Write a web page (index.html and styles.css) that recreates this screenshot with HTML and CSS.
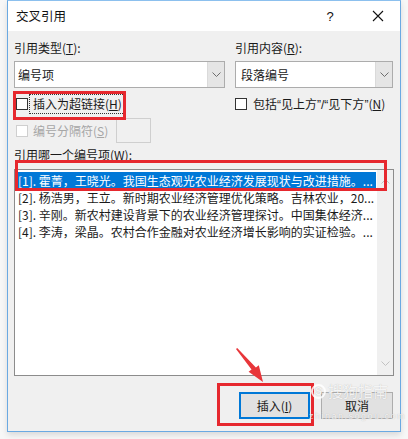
FILE: index.html
```html
<!DOCTYPE html>
<html lang="zh">
<head>
<meta charset="utf-8">
<link rel="stylesheet" href="styles.css">
</head>
<body>
<div class="dialog">
  <div class="titlebar">
    <span class="title">交叉引用</span>
    <span class="help">?</span>
    <span class="close"><svg width="12" height="12" viewBox="0 0 12 12"><path d="M1 1 L11 11 M11 1 L1 11" stroke="#111" stroke-width="1.1" fill="none"/></svg></span>
  </div>
  <div class="content">
    <div class="grid">
      <div class="col left">
        <div class="label">引用类型(<u>T</u>):</div>
        <div class="combo">
          <span class="combo-text">编号项</span>
          <span class="drop"><svg width="9" height="6" viewBox="0 0 9 6"><path d="M0.5 0.5 L4.5 4.5 L8.5 0.5" stroke="#6d6d6d" fill="none"/></svg></span>
        </div>
        <div class="check">
          <span class="box"></span>
          <span class="check-text focused">插入为超链接(<u>H</u>)</span>
        </div>
        <div class="check disabled">
          <span class="box"></span>
          <span class="check-text">编号分隔符(<u>S</u>)</span>
          <span class="sep-input"></span>
        </div>
      </div>
      <div class="col right">
        <div class="label">引用内容(<u>R</u>):</div>
        <div class="combo">
          <span class="combo-text">段落编号</span>
          <span class="drop"><svg width="9" height="6" viewBox="0 0 9 6"><path d="M0.5 0.5 L4.5 4.5 L8.5 0.5" stroke="#6d6d6d" fill="none"/></svg></span>
        </div>
        <div class="check">
          <span class="box"></span>
          <span class="check-text">包括<span class="q">“</span>见上方<span class="q">”/“</span>见下方<span class="q">”</span>(<u>N</u>)</span>
        </div>
      </div>
    </div>
    <div class="label list-label">引用哪一个编号项(<u>W</u>):</div>
    <div class="listbox">
      <div class="items">
        <div class="item selected">[1]. 霍菁，王晓光。我国生态观光农业经济发展现状与改进措施。...</div>
        <div class="item">[2]. 杨浩男，王立。新时期农业经济管理优化策略。吉林农业，20...</div>
        <div class="item">[3]. 辛刚。新农村建设背景下的农业经济管理探讨。中国集体经济...</div>
        <div class="item">[4]. 李涛，梁晶。农村合作金融对农业经济增长影响的实证检验。...</div>
      </div>
      <div class="scrollbar">
        <svg width="9" height="6" viewBox="0 0 9 6"><path d="M0.5 5.5 L4.5 1.5 L8.5 5.5" stroke="#c2c2c2" fill="none"/></svg>
        <svg width="9" height="6" viewBox="0 0 9 6"><path d="M0.5 0.5 L4.5 4.5 L8.5 0.5" stroke="#c2c2c2" fill="none"/></svg>
      </div>
    </div>
    <div class="buttons">
      <button class="btn default">插入(<u>I</u>)</button>
      <button class="btn">取消</button>
    </div>
  </div>

  <div class="mark mark-check"></div>
  <div class="mark mark-item"></div>
  <div class="mark mark-insert"></div>
  <svg class="arrow" width="40" height="45" viewBox="0 0 40 45">
    <polygon points="0,0 15.5,20.5 12.6,22.8 27,33 22.8,16.2 19.9,18.5 1.2,-0.9" fill="#e8363a"/>
  </svg>
  <div class="watermark">
    <div class="wm-top"><span class="wm-logo">S</span>搜狗指南</div>
    <div class="wm-url">zhinan.sogou.com</div>
  </div>
</div>
</body>
</html>
```

FILE: styles.css
```css
* { box-sizing: border-box; }

html, body {
  margin: 0;
  padding: 0;
}

body {
  width: 408px;
  height: 439px;
  background: #f7f7f7;
  font-family: "Noto Sans CJK SC", "Microsoft YaHei", sans-serif;
  font-size: 12px;
  color: #1a1a1a;
  overflow: hidden;
}

.dialog {
  position: relative;
  margin-left: 7px;
  width: 394px;
  height: 432px;
  border: 1px solid #6aa9e2;
  border-top-color: #8cc0ee;
  background: #f0f0f0;
  box-shadow: 0 3px 6px rgba(0,0,0,0.12);
  display: flex;
  flex-direction: column;
}

.titlebar {
  height: 30px;
  flex: none;
  background: #fff;
  display: flex;
  align-items: center;
  padding-left: 8px;
}

.title {
  flex: 1;
  font-size: 12.5px;
  line-height: 16px;
  color: #111;
}

.help {
  width: 20px;
  text-align: center;
  font-family: "Liberation Sans", sans-serif;
  font-size: 13px;
  color: #111;
  margin-right: 26px;
}

.close {
  width: 24px;
  display: flex;
  justify-content: center;
  margin-right: 10px;
}

.content {
  flex: 1;
  padding: 9px 6px 0 6px;
  display: flex;
  flex-direction: column;
}

.grid {
  display: grid;
  grid-template-columns: 211px 158px;
  column-gap: 10px;
}

.label {
  line-height: 16px;
  height: 16px;
  white-space: nowrap;
}

.combo {
  margin-top: 5px;
  height: 27px;
  background: #fff;
  border: 1px solid #acacac;
  display: flex;
  align-items: stretch;
}

.combo-text {
  flex: 1;
  line-height: 25px;
  padding-left: 3px;
}

.right .combo-text {
  padding-left: 5px;
}

.drop {
  width: 17px;
  background: #e5e5e5;
  border-left: 1px solid #dadada;
  display: flex;
  align-items: center;
  justify-content: center;
}

.check {
  display: flex;
  align-items: center;
  margin-top: 7px;
  height: 18px;
  white-space: nowrap;
}

.box {
  width: 12px;
  height: 12px;
  border: 1px solid #333;
  background: #fff;
  margin-left: 2px;
  flex: none;
}

.right .box {
  margin-left: 0;
}

.check-text {
  margin-left: 4px;
  line-height: 16px;
  padding: 0 1px;
}

.right .check-text {
  margin-left: 5px;
}

.q {
  font-family: "Liberation Sans", sans-serif;
  font-size: 12px;
}

.focused {
  margin-left: 2px;
  padding: 0 2px 0 3px;
  height: 18px;
  line-height: 17px;
  outline: 1px dotted #333;
}

.check.disabled {
  margin-top: 5px;
  height: 25px;
  color: #a6a6a6;
}

.check.disabled .box {
  border-color: #cfcfcf;
}

.sep-input {
  margin-left: 7px;
  width: 35px;
  height: 25px;
  border: 1px solid #cfcfcf;
  background: #f0f0f0;
}

.list-label {
  margin-top: 4px;
}

.listbox {
  margin-top: 6px;
  height: 207px;
  border: 1px solid #8c8c8c;
  background: #fff;
  display: flex;
}

.items {
  flex: 1;
  padding: 2px 0 0 2px;
  min-width: 0;
}

.item {
  height: 17px;
  line-height: 17px;
  padding-left: 1px;
  white-space: nowrap;
  overflow: hidden;
  color: #1a1a1a;
}

.item.selected {
  background: #0078d7;
  color: #fff;
}

.scrollbar {
  width: 16px;
  margin-left: 1px;
  background: #f0f0f0;
  display: flex;
  flex-direction: column;
  justify-content: space-between;
  align-items: center;
  padding: 8px 0 8px;
}

.buttons {
  margin-top: 16px;
  display: flex;
  justify-content: flex-end;
  gap: 11px;
  padding-right: 1px;
}

.btn {
  width: 72px;
  height: 27px;
  font-family: inherit;
  font-size: 12px;
  color: #1a1a1a;
  background: #e1e1e1;
  border: 1px solid #adadad;
  padding: 0;
}

.btn.default {
  border: 2px solid #0078d7;
  width: 71px;
}

/* annotations */
.mark {
  position: absolute;
  border: 3px solid #e6282e;
}

.mark-check {
  left: 5px;
  top: 90px;
  width: 113px;
  height: 29px;
}

.mark-item {
  left: 7px;
  top: 159px;
  width: 372px;
  height: 31px;
}

.mark-insert {
  left: 209px;
  top: 382px;
  width: 97px;
  height: 43px;
}

.arrow {
  position: absolute;
  left: 228px;
  top: 348px;
  overflow: visible;
}

.watermark {
  position: absolute;
  left: 303px;
  top: 380px;
  color: rgba(255,255,255,0.85);
  text-shadow: 0 0 1px rgba(0,0,0,0.25);
  pointer-events: none;
}

.wm-top {
  font-size: 15px;
  line-height: 20px;
  display: flex;
  align-items: center;
  gap: 2px;
}

.wm-logo {
  width: 15px;
  height: 15px;
  border: 2px solid rgba(255,255,255,0.85);
  border-radius: 50%;
  font-size: 10px;
  line-height: 11px;
  text-align: center;
  font-family: "Liberation Sans", sans-serif;
  font-weight: bold;
}

.wm-url {
  font-family: "Liberation Sans", sans-serif;
  font-size: 9px;
  letter-spacing: 1.5px;
  line-height: 12px;
  margin-top: 9px;
  margin-left: -2px;
}
```
